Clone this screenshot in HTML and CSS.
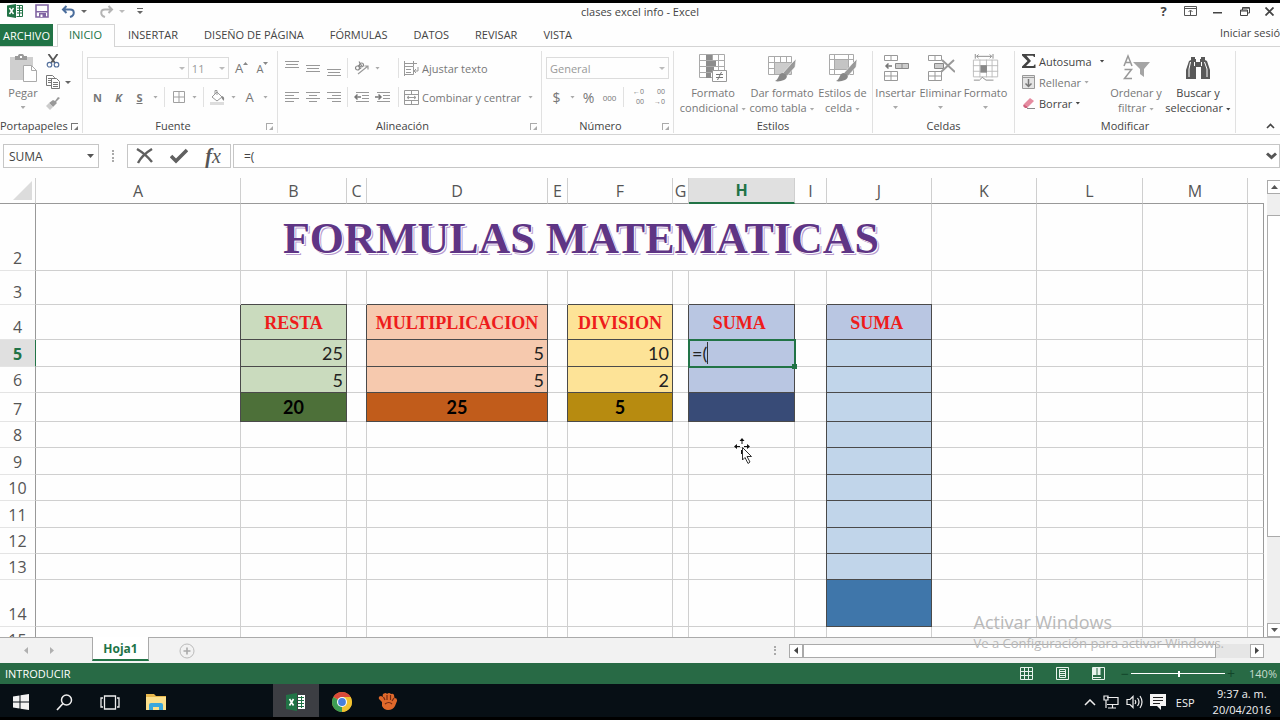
FILE: index.html
```html
<!DOCTYPE html>
<html lang="es">
<head>
  <meta charset="UTF-8" />
  <meta name="viewport" content="width=device-width, initial-scale=1.0" />
  <title>clases excel info - Excel</title>
  <link rel="stylesheet" href="styles.css">
</head>
<body>
  <header class="titlebar">
    <div class="quick-access">
      <svg class="app-icon" width="16" height="14" viewBox="0 0 16 14"><path fill="#217346" d="M0 1.5 9 0v14L0 12.5z"/><path stroke="#fff" stroke-width="1.4" d="m2.5 4 4 6m0-6-4 6"/><path fill="#fff" stroke="#217346" d="M9.5 1.5h6v11h-6"/><path stroke="#217346" d="M10 4h5M10 6.500h5M10 9h5M12.500 2v10"/></svg>
      <button aria-label="Guardar"><svg width="14" height="14" viewBox="0 0 14 14"><path fill="#fff" stroke="#8064a2" stroke-width="1.600" d="M1 1h12v12H1z"/><path fill="#8064a2" d="M1 7h12v1.500H1zM4 9h7v4H4z"/><path fill="#fff" d="M5.500 10.500h2V13h-2z"/></svg></button>
      <button class="has-caret" aria-label="Deshacer"><svg width="15" height="13" viewBox="0 0 15 13"><path fill="none" stroke="#4a6d9c" stroke-width="2" d="M2 4.500h7c5 0 5 6 0 7.500M5.500 1 2 4.500 5.500 8"/></svg></button>
      <button class="has-caret dim" aria-label="Rehacer"><svg width="15" height="13" viewBox="0 0 15 13"><path fill="none" stroke="#b4b4b4" stroke-width="2" d="M13 4.500H6c-5 0-5 6 0 7.500M9.500 1 13 4.500 9.500 8"/></svg></button>
      <button aria-label="Personalizar"><svg width="6" height="7" viewBox="0 0 6 7"><path fill="#666" d="M0 0h6v1H0zM0 3h6L3 6z"/></svg></button>
    </div>
    <div class="window-title">clases excel info - Excel</div>
    <div class="window-buttons">
      <button class="help" aria-label="Ayuda">?</button>
      <button aria-label="Opciones de la cinta"><svg width="13" height="10" viewBox="0 0 13 10"><path fill="none" stroke="#555" d="M.5.5h12v9H.5zM1 2.500h11M6.500 9V4.500M4.500 6l2-2 2 2"/></svg></button>
      <button aria-label="Minimizar"><svg width="9" height="10" viewBox="0 0 9 10"><path fill="#444" d="M0 6h9v1.500H0z"/></svg></button>
      <button aria-label="Restaurar"><svg width="10" height="9" viewBox="0 0 10 9"><path fill="none" stroke="#444" d="M.5 3h7v5.500h-7zM.5 4h7M2.500 3V.5h7V6h-2M2.500 1.200h7"/></svg></button>
      <button aria-label="Cerrar"><svg width="9" height="9" viewBox="0 0 9 9"><path stroke="#444" stroke-width="1.800" d="m.5.5 8 8m0-8-8 8"/></svg></button>
    </div>
  </header>

  <nav class="tabs">
    <button class="file-tab">ARCHIVO</button>
    <button class="tab active">INICIO</button>
    <button class="tab">INSERTAR</button>
    <button class="tab">DISEÑO DE PÁGINA</button>
    <button class="tab">FÓRMULAS</button>
    <button class="tab">DATOS</button>
    <button class="tab">REVISAR</button>
    <button class="tab">VISTA</button>
    <a class="sign-in" href="#">Iniciar sesión</a>
  </nav>

  <div class="ribbon">
    <section class="group clipboard">
      <div class="group-body">
        <button class="big dim"><svg width="28" height="28" viewBox="0 0 28 28"><path fill="#cfcfcf" d="M1 3h23v23H1z"/><path fill="#9a9a9a" d="M6 2h3c0-3 6-3 6 0h3v4H6z"/><path fill="#fff" d="M11 2h2v2h-2z"/><path fill="#fff" stroke="#aaa" d="M14.500 11.500h8l5 5v11h-13z"/><path fill="none" stroke="#aaa" d="M22.500 11.500v5h5"/></svg>Pegar<i class="caret"></i></button>
        <div class="stack">
          <button aria-label="Cortar"><svg width="14" height="14" viewBox="0 0 14 14"><path fill="none" stroke="#555" stroke-width="1.800" d="M2.500 0 9 9M11.500 0 5 9"/><circle cx="3.500" cy="10.700" r="2.300" fill="none" stroke="#54709c" stroke-width="1.200"/><circle cx="10.500" cy="10.700" r="2.300" fill="none" stroke="#54709c" stroke-width="1.200"/></svg></button>
          <button class="has-caret" aria-label="Copiar"><svg width="14" height="14" viewBox="0 0 14 14"><path fill="#fff" stroke="#777" d="M.5.5h6l2 2v8h-8zM2 3.500h5M2 5.500h5M2 7.500h5"/><path fill="#fff" stroke="#777" d="M5.500 3.500h5l3 3v7h-8zM7 7.500h5M7 9.500h5M7 11.500h5"/></svg></button>
          <button aria-label="Copiar formato"><svg width="14" height="13" viewBox="0 0 14 13"><path fill="#999" d="m14 1-4 4 1 1-4 4-4-4 4-3 2 1 3-4z"/><path fill="#ccc" d="m3 6 4 4-3 3-4-4z"/></svg></button>
        </div>
      </div>
      <div class="group-label">Portapapeles<button class="launcher dark" aria-label="Portapapeles"></button></div>
    </section>

    <section class="group font">
      <div class="group-body rows">
        <div class="row">
          <div class="combo font-name"><select aria-label="Fuente"><option></option></select></div>
          <div class="combo font-size"><select aria-label="Tamaño de fuente"><option>11</option></select></div>
          <button class="tool grow" aria-label="Aumentar tamaño">A<svg width="5" height="3" viewBox="0 0 5 3"><path fill="#888" d="M0 3h5L2.500 0z"/></svg></button>
          <button class="tool shrink" aria-label="Disminuir tamaño">A<svg width="5" height="3" viewBox="0 0 5 3"><path fill="#888" d="M0 0h5L2.500 3z"/></svg></button>
        </div>
        <div class="row">
          <button class="tool bold">N</button>
          <button class="tool bold italic">K</button>
          <button class="tool bold underline">S</button>
          <i class="caret"></i>
          <span class="sep"></span>
          <button class="tool" aria-label="Bordes"><svg width="12" height="12" viewBox="0 0 12 12"><path fill="none" stroke="#a0a0a0" d="M.5.5h11v11H.5zM6 0v12M0 6h12"/></svg></button>
          <i class="caret"></i>
          <span class="sep"></span>
          <button class="tool" aria-label="Color de relleno"><svg width="15" height="15" viewBox="0 0 15 15"><path fill="#fff" stroke="#999" d="m2 7 5-5 5 5-5 4zM5 4V.5h2V5"/><path fill="#888" d="M12 6c3 1 2 3 2 5-1-2-3-1-2-5z"/><path fill="#ddd" d="M0 12h14v3H0z"/></svg></button>
          <i class="caret"></i>
          <button class="tool big-letter" aria-label="Color de fuente">A</button>
          <i class="caret"></i>
        </div>
      </div>
      <div class="group-label">Fuente<button class="launcher" aria-label="Fuente"></button></div>
    </section>

    <section class="group align">
      <div class="group-body rows">
        <div class="row">
          <button class="tool" aria-label="Alinear arriba"><svg width="14" height="17" viewBox="0 0 14 17"><path stroke="#999" d="M0 1.500h14M1 4.500h12M0 7.500h14"/></svg></button>
          <button class="tool" aria-label="Alinear en el medio"><svg width="14" height="17" viewBox="0 0 14 17"><path stroke="#999" d="M0 5.500h14M1 8.500h12M0 11.500h14"/></svg></button>
          <button class="tool" aria-label="Alinear abajo"><svg width="14" height="17" viewBox="0 0 14 17"><path stroke="#999" d="M0 9.500h14M1 12.500h12M0 15.500h14"/></svg></button>
          <span class="sep"></span>
          <button class="tool orient" aria-label="Orientación"><svg width="16" height="14" viewBox="0 0 16 14"><path fill="none" stroke="#999" stroke-width="1.200" d="m4 13 10-8M10.500 5H14v3.500"/><circle cx="3.500" cy="7" r="2" fill="none" stroke="#888" stroke-width="1.200"/><circle cx="7.500" cy="4" r="2" fill="none" stroke="#888" stroke-width="1.200"/><path stroke="#888" stroke-width="1.200" d="m4 4 3 4M5 .5l3 5"/></svg></button>
          <i class="caret"></i>
          <span class="sep spaced"></span>
          <button class="wide-tool"><svg width="15" height="15" viewBox="0 0 15 15"><path fill="none" stroke="#999" d="M.5 0v15M0 2.500h13M0 5.500h9.500v8H.5M2 8.500h5M2 11.500h5M9.500 0v5M14 6v4h-4m2-2-2 2 2 2"/></svg>Ajustar texto</button>
        </div>
        <div class="row">
          <button class="tool" aria-label="Alinear a la izquierda"><svg width="14" height="11" viewBox="0 0 14 11"><path stroke="#999" d="M0 .5h14M0 3.500h9M0 6.500h14M0 9.500h9"/></svg></button>
          <button class="tool" aria-label="Centrar"><svg width="14" height="11" viewBox="0 0 14 11"><path stroke="#999" d="M0 .5h14M3 3.500h8M0 6.500h14M3 9.500h8"/></svg></button>
          <button class="tool" aria-label="Alinear a la derecha"><svg width="14" height="11" viewBox="0 0 14 11"><path stroke="#999" d="M0 .5h14M5 3.500h9M0 6.500h14M5 9.500h9"/></svg></button>
          <span class="sep"></span>
          <button class="tool" aria-label="Disminuir sangría"><svg width="15" height="11" viewBox="0 0 15 11"><path stroke="#999" d="M2 .5h13M8 3.500h7M8 6.500h7M2 9.500h13"/><path fill="none" stroke="#777" stroke-width="1.500" d="M7 5H1M3.500 2.500 1 5l2.500 2.500"/></svg></button>
          <button class="tool" aria-label="Aumentar sangría"><svg width="15" height="11" viewBox="0 0 15 11"><path stroke="#999" d="M2 .5h13M8 3.500h7M8 6.500h7M2 9.500h13"/><path fill="none" stroke="#777" stroke-width="1.500" d="M0 5h6M3.500 2.500 6 5 3.500 7.500"/></svg></button>
          <span class="sep roomy"></span>
          <button class="wide-tool merge"><svg width="15" height="15" viewBox="0 0 15 15"><path fill="none" stroke="#999" d="M.5.5h14v14H.5zM0 4.500h15M0 10.500h15M7.500 0v4M7.500 11v4M3 7.500h9M5 6 3 7.500 5 9M10 6l2 1.500L10 9"/></svg>Combinar y centrar</button>
          <i class="caret"></i>
        </div>
      </div>
      <div class="group-label">Alineación<button class="launcher" aria-label="Alineación"></button></div>
    </section>

    <section class="group number">
      <div class="group-body rows">
        <div class="row">
          <div class="combo format"><select aria-label="Formato de número"><option>General</option></select></div>
        </div>
        <div class="row">
          <button class="tool symbol">$</button>
          <i class="caret"></i>
          <button class="tool symbol percent">%</button>
          <button class="tool tiny">000</button>
          <span class="sep"></span>
          <button class="tool decimals" aria-label="Aumentar decimales"><span>←0</span><span>00</span></button>
          <button class="tool decimals" aria-label="Disminuir decimales"><span>00</span><span>→0</span></button>
        </div>
      </div>
      <div class="group-label">Número<button class="launcher" aria-label="Número"></button></div>
    </section>

    <section class="group styles">
      <div class="group-body">
        <button class="big dim cond"><svg width="28" height="28" viewBox="0 0 28 28"><path fill="#fff" stroke="#aaa" d="M.5.5h25v23H.5zM0 6.500h26M0 12.500h26M0 18.500h26M7.500 0v24M13.500 0v24M19.500 0v24"/><path fill="#8c8c8c" d="M7 1h6v5H7zM7 7h10v5H7zM7 13h8v5H7zM7 19h5v5H7z"/><path fill="#fff" stroke="#999" d="M13.500 16.500h14v11h-14z"/><path stroke="#777" d="M17 20.500h7M17 23.500h7M22.500 18l-4 8"/></svg><span>Formato<br>condicional <i class="caret"></i></span></button>
        <button class="big dim table"><svg width="28" height="28" viewBox="0 0 28 28"><path fill="#fff" stroke="#aaa" d="M.5 2.500h23v18H.5zM0 8.500h24M0 14.500h24M6.500 2v19M12.500 2v19M18.500 2v19"/><path fill="#ccc" d="M7 9h16v11H7z"/><path fill="#999" stroke="#fff" stroke-width=".5" d="m28 5-1 8-8 9-4-3 8-9z"/><path fill="#888" d="M15 19c5 1 5 5 1 7-3 1-6 2-9 1 4-1 3-8 8-8z"/></svg><span>Dar formato<br>como tabla <i class="caret"></i></span></button>
        <button class="big dim cell"><svg width="28" height="28" viewBox="0 0 28 28"><path fill="#fff" stroke="#aaa" d="M.5.500h24v20H.5zM0 5.500h25M0 15.500h25M5.500 0v21M19.500 0v21"/><path fill="#c4c4c4" d="M6 6h13v9H6z"/><path fill="#999" stroke="#fff" stroke-width=".5" d="m28 5-1 8-8 9-4-3 8-9z"/><path fill="#888" d="M15 19c5 1 5 5 1 7-3 1-6 2-9 1 4-1 3-8 8-8z"/></svg><span>Estilos de<br>celda <i class="caret"></i></span></button>
      </div>
      <div class="group-label">Estilos</div>
    </section>

    <section class="group cells">
      <div class="group-body">
        <button class="big dim"><svg width="28" height="28" viewBox="0 0 28 28"><path fill="#fff" stroke="#999" d="M2.500 1.500h13v5h-13zM9 1v6M2.500 17.500h13v9h-13zM9 17v10M2 22h14"/><path fill="#ccc" stroke="#888" d="M13.500 9.500h13v5h-13zM20 9v6"/><path fill="none" stroke="#777" stroke-width="1.500" d="M10 12H4m2.500-2.500L4 12l2.500 2.500"/></svg>Insertar<i class="caret"></i></button>
        <button class="big dim"><svg width="28" height="28" viewBox="0 0 28 28"><path fill="#fff" stroke="#999" d="M1.500 1.500h13v5h-13zM8 1v6M1.500 17.500h13v9h-13zM8 17v10M1 22h14"/><path fill="#ccc" stroke="#888" d="M7.500 9.500h9v5h-9z"/><path fill="none" stroke="#999" stroke-width="2" d="m15 6 13 12M27 6 14 18"/></svg>Eliminar<i class="caret"></i></button>
        <button class="big dim"><svg width="28" height="30" viewBox="0 0 28 30"><path fill="#fff" stroke="#bbb" d="M.5 6.500h26v18H.5zM0 12.500h27M0 18.500h27M7.500 6v19M14.500 6v19M20.500 6v19"/><path fill="#888" d="M8 12h7v8H8z"/><path fill="none" stroke="#888" d="M2.500 0v5M21.500 0v5M4 2.500h16M6 .5l-2 2 2 2M18 .5l2 2-2 2M1 28l6 0 3-3 4 3h8"/></svg>Formato<i class="caret"></i></button>
      </div>
      <div class="group-label">Celdas</div>
    </section>

    <section class="group edit">
      <div class="group-body">
        <div class="stack labelled">
          <button><svg width="14" height="14" viewBox="0 0 14 14"><path fill="#444" d="M0 0h13v3h-1l-1-1.200H4.500L9 7l-5 5h7.500l1-1.500h1V14H0v-1.500L5.500 7 0 1.500z"/></svg>Autosuma<i class="caret wide"></i></button>
          <button class="dim"><svg width="14" height="14" viewBox="0 0 14 14"><path fill="#e4e4e4" stroke="#999" d="M.5.500h12v13H.5zM0 2.500h13"/><path fill="none" stroke="#777" stroke-width="1.500" d="M6.500 4v8M3.500 8.500l3 3 3-3"/></svg>Rellenar<i class="caret"></i></button>
          <button><svg width="14" height="14" viewBox="0 0 14 14"><path fill="#e58ba0" d="m8 2 4 3-6 6-4-3z"/><path fill="#d0607c" d="m2 8 4 3-1 1H3L1 10z"/><path stroke="#888" d="M5 12.500h8"/></svg>Borrar<i class="caret"></i></button>
        </div>
        <button class="big dim sort"><svg width="28" height="28" viewBox="0 0 28 28"><path fill="none" stroke="#999" stroke-width="1.500" d="m2 12 4-10 4 10M3.500 8.500h5M2.500 15.500h7l-7 9h7.500"/><path fill="#a5a5a5" d="M11 8h17l-6 7v8l-4-3v-5z"/></svg><span>Ordenar y<br>filtrar <i class="caret"></i></span></button>
        <button class="big find"><svg width="28" height="28" viewBox="0 0 28 28"><path fill="#595959" d="M7 3h4v2h1v3h4V5h1V3h4v3l2 1 3 9v9h-9V13h-5v12H2v-9l3-9 2-1z"/><path stroke="#fff" d="M6.500 8 5 15v8M10.500 8v4M17.500 8v4M20.500 8l2.500 7v8"/></svg><span>Buscar y<br>seleccionar <i class="caret"></i></span></button>
      </div>
      <div class="group-label">Modificar</div>
    </section>
    <button class="collapse" aria-label="Contraer la cinta"><svg width="9" height="6" viewBox="0 0 9 6"><path fill="none" stroke="#444" stroke-width="1.600" d="m1 5 3.500-3.500L8 5"/></svg></button>
  </div>

  <div class="formula-bar">
    <div class="name-box">
      <input type="text" aria-label="Cuadro de nombres" value="SUMA">
      <button aria-label="Nombres"><svg width="7" height="4" viewBox="0 0 7 4"><path fill="#555" d="M0 0h7L3.500 4z"/></svg></button>
    </div>
    <span class="dots"></span>
    <div class="formula-buttons">
      <button aria-label="Cancelar"><svg width="18" height="16" viewBox="0 0 18 16"><path fill="none" stroke="#606060" stroke-width="2.400" d="M1 1c5 3 11 8 15 13M16 1C11 4 5 9 2 15"/></svg></button>
      <button aria-label="Introducir"><svg width="18" height="16" viewBox="0 0 18 16"><path fill="none" stroke="#606060" stroke-width="3.600" d="m1 8 5 5L17 2"/></svg></button>
      <button class="fx" aria-label="Insertar función"><b>f</b>x</button>
    </div>
    <div class="formula-box">
      <input type="text" aria-label="Barra de fórmulas" value="=(">
      <button aria-label="Expandir"><svg width="11" height="8" viewBox="0 0 11 8"><path fill="none" stroke="#555" stroke-width="3" d="m1 1.500 4.500 4 4.500-4"/></svg></button>
    </div>
  </div>

  <main class="sheet">
    <div class="grid-area">
      <table class="grid">
        <colgroup>
          <col class="c-head"><col class="c-a"><col class="c-wide"><col class="c-gap"><col class="c-d"><col class="c-gap"><col class="c-mid"><col class="c-g"><col class="c-wide"><col class="c-i"><col class="c-mid"><col class="c-mid"><col class="c-wide"><col class="c-mid"><col>
        </colgroup>
        <thead>
          <tr>
            <th class="corner"><svg width="19" height="19" viewBox="0 0 19 19"><path fill="#dcdcdc" d="M19 0v19H0z"/></svg></th>
            <th>A</th><th>B</th><th>C</th><th>D</th><th>E</th><th>F</th><th>G</th><th class="current">H</th><th>I</th><th>J</th><th>K</th><th>L</th><th>M</th><th></th>
          </tr>
        </thead>
        <tbody>
          <tr class="r-title"><th>2</th><td></td><td colspan="9" class="title">FORMULAS MATEMATICAS</td><td></td><td></td><td></td><td></td></tr>
          <tr class="r-space"><th>3</th><td></td><td></td><td></td><td></td><td></td><td></td><td></td><td></td><td></td><td></td><td></td><td></td><td></td><td></td></tr>
          <tr class="r-heading"><th>4</th><td></td><td class="name green">RESTA</td><td></td><td class="name orange">MULTIPLICACION</td><td></td><td class="name yellow">DIVISION</td><td></td><td class="name blue">SUMA&nbsp;</td><td></td><td class="name blue">SUMA&nbsp;</td><td></td><td></td><td></td><td></td></tr>
          <tr class="r-tall"><th class="current">5</th><td></td><td class="green">25</td><td></td><td class="orange">5</td><td></td><td class="yellow">10</td><td></td><td class="blue editing"><span>=(</span></td><td></td><td class="sky"></td><td></td><td></td><td></td><td></td></tr>
          <tr><th>6</th><td></td><td class="green">5</td><td></td><td class="orange">5</td><td></td><td class="yellow">2</td><td></td><td class="blue"></td><td></td><td class="sky"></td><td></td><td></td><td></td><td></td></tr>
          <tr class="r-total"><th>7</th><td></td><td class="total dark-green">20</td><td></td><td class="total dark-orange">25</td><td></td><td class="total dark-yellow">5</td><td></td><td class="total dark-blue"></td><td></td><td class="sky"></td><td></td><td></td><td></td><td></td></tr>
          <tr><th>8</th><td></td><td></td><td></td><td></td><td></td><td></td><td></td><td></td><td></td><td class="sky"></td><td></td><td></td><td></td><td></td></tr>
          <tr class="r-tall"><th>9</th><td></td><td></td><td></td><td></td><td></td><td></td><td></td><td></td><td></td><td class="sky"></td><td></td><td></td><td></td><td></td></tr>
          <tr><th>10</th><td></td><td></td><td></td><td></td><td></td><td></td><td></td><td></td><td></td><td class="sky"></td><td></td><td></td><td></td><td></td></tr>
          <tr class="r-tall"><th>11</th><td></td><td></td><td></td><td></td><td></td><td></td><td></td><td></td><td></td><td class="sky"></td><td></td><td></td><td></td><td></td></tr>
          <tr><th>12</th><td></td><td></td><td></td><td></td><td></td><td></td><td></td><td></td><td></td><td class="sky"></td><td></td><td></td><td></td><td></td></tr>
          <tr><th>13</th><td></td><td></td><td></td><td></td><td></td><td></td><td></td><td></td><td></td><td class="sky"></td><td></td><td></td><td></td><td></td></tr>
          <tr class="r-last"><th>14</th><td></td><td></td><td></td><td></td><td></td><td></td><td></td><td></td><td></td><td class="total steel"></td><td></td><td></td><td></td><td></td></tr>
          <tr><th>15</th><td></td><td></td><td></td><td></td><td></td><td></td><td></td><td></td><td></td><td></td><td></td><td></td><td></td><td></td></tr>
        </tbody>
      </table>
      <svg class="pointer" width="20" height="28" viewBox="0 0 20 28"><path fill="#111" d="m8 0 2.500 3H8.500v3h-1V3h-2zM0 8.500 3 6v2h3v1H3v2zM16 8.500 13 6v2h-3v1h3v2zM7 12h1.500v4H7z"/><path fill="#fff" stroke="#333" d="m8.500 9.500 9 9h-4.500l3 5.500-2 1.500-3-6-2.500 2.500z"/></svg>
    </div>
    <div class="v-scroll">
      <button aria-label="Subir"><svg width="7" height="4" viewBox="0 0 7 4"><path fill="#555" d="M0 4h7L3.500 0z"/></svg></button>
      <div class="v-track"><div class="v-thumb"></div></div>
      <button aria-label="Bajar"><svg width="7" height="4" viewBox="0 0 7 4"><path fill="#555" d="M0 0h7L3.500 4z"/></svg></button>
    </div>
  </main>

  <div class="sheet-tabs">
    <button class="arrow" aria-label="Hoja anterior"><svg width="4" height="7" viewBox="0 0 4 7"><path fill="#b0b0b0" d="M4 0v7L0 3.500z"/></svg></button>
    <button class="arrow" aria-label="Hoja siguiente"><svg width="4" height="7" viewBox="0 0 4 7"><path fill="#b0b0b0" d="M0 0v7l4-3.500z"/></svg></button>
    <button class="sheet-tab">Hoja1</button>
    <button class="add-sheet" aria-label="Hoja nueva"><svg width="16" height="16" viewBox="0 0 16 16"><circle cx="8" cy="8" r="7" fill="none" stroke="#bbb"/><path stroke="#aaa" stroke-width="1.600" d="M4.500 8h7M8 4.500v7"/></svg></button>
    <span class="dots"></span>
    <div class="h-scroll">
      <button aria-label="Izquierda"><svg width="4" height="7" viewBox="0 0 4 7"><path fill="#444" d="M4 0v7L0 3.500z"/></svg></button>
      <div class="h-thumb"></div>
      <div class="h-track"></div>
      <button aria-label="Derecha"><svg width="4" height="7" viewBox="0 0 4 7"><path fill="#444" d="M0 0v7l4-3.500z"/></svg></button>
    </div>
  </div>

  <div class="status-bar">
    <span>INTRODUCIR</span>
    <div class="views">
      <button aria-label="Normal"><svg width="13" height="13" viewBox="0 0 13 13"><path fill="none" stroke="#e8f3ec" d="M.5.500h12v12H.5zM0 4.500h13M0 8.500h13M4.500 0v13M8.500 0v13"/></svg></button>
      <button aria-label="Diseño de página"><svg width="13" height="13" viewBox="0 0 13 13"><path fill="none" stroke="#e8f3ec" d="M.5.500h12v12H.5zM3.500 2.500h6v8h-6zM4 4.500h5M4 6.500h5M4 8.500h5"/></svg></button>
      <button aria-label="Salto de página"><svg width="13" height="13" viewBox="0 0 13 13"><path fill="none" stroke="#e8f3ec" d="M.5.500h12v12H.5z"/><path fill="#e8f3ec" d="M1 1h3.500v7H1zM5.500 1h3v7h-3zM0 10h9v1H0z"/></svg></button>
    </div>
    <div class="zoom">
      <button aria-label="Alejar">−</button>
      <input type="range" min="0" max="100" value="51" aria-label="Zoom">
      <button aria-label="Acercar">+</button>
      <span>140%</span>
    </div>
  </div>

  <footer class="taskbar">
    <button class="task start" aria-label="Inicio"><svg width="16" height="16" viewBox="0 0 16 16"><path fill="#f2f2f2" d="m0 2.500 6.500-1v6H0zM7.500 1.300 16 0v7.500H7.500zM0 8.500h6.500v6L0 13.500zM7.500 8.500H16V16l-8.500-1.300z"/></svg></button>
    <button class="task" aria-label="Buscar"><svg width="17" height="17" viewBox="0 0 17 17"><circle cx="10.500" cy="6" r="5" fill="none" stroke="#eee" stroke-width="1.500"/><path stroke="#eee" stroke-width="1.700" d="m7 9.500-6 6.500"/></svg></button>
    <button class="task" aria-label="Vista de tareas"><svg width="20" height="15" viewBox="0 0 20 15"><path fill="none" stroke="#eee" stroke-width="1.300" d="M4.500 1h11v13h-11zM3 3H1v9h2M17 3h2v9h-2"/></svg></button>
    <button class="task" aria-label="Explorador de archivos"><svg width="20" height="18" viewBox="0 0 20 18"><path fill="#e8b84c" d="M0 1h8l2 2h10v14H0z"/><path fill="#fbe08c" d="M0 4h20v13H0z"/><path fill="#3aa7dd" d="M3 17V12q0-2 2-2h10q2 0 2 2v5h-4v-3H7v3z"/></svg></button>
    <button class="task running" aria-label="Excel"><svg width="20" height="18" viewBox="0 0 20 18"><path fill="#217346" d="M0 2 11 0v18L0 16z"/><path stroke="#fff" stroke-width="1.600" d="m3.500 6 4 6.500m0-6.500-4 6.500"/><path fill="#fff" d="M12 2h7v14h-7z"/><path stroke="#217346" d="M12 4.500h6M12 7.500h6M12 10.500h6M12 13.500h6M15.500 3v12"/></svg></button>
    <button class="task" aria-label="Chrome"><svg width="22" height="22" viewBox="0 0 22 22"><circle cx="11" cy="11" r="10" fill="#f2c230"/><path fill="#da4a3a" d="M11 11 2.340 6a10 10 0 0 1 17.320 0z"/><path fill="#3d9c54" d="M11 11v10A10 10 0 0 1 2.340 6z"/><path fill="#f2c230" d="M11 6h8.660A10 10 0 0 1 11 21l4-8z"/><circle cx="11" cy="11" r="5" fill="#fff"/><circle cx="11" cy="11" r="3.900" fill="#4a80dc"/></svg></button>
    <button class="task" aria-label="Captura"><svg width="20" height="18" viewBox="0 0 20 18"><path fill="#e0692b" d="M4 9 1 6q-1-3 2-3l2 1q-1-3 1-3.500Q8-.5 9 1q2-2 4 0 2-1 3 1l.5 3q3 0 2.500 3l-2 5q-2 4-7 4-4 0-6-4z"/><path fill="none" stroke="#732a14" stroke-width="1.200" d="M5.500 4 7 7M9 2v5M12.500 2v5M16 5l-2 3M7 11q4-3 7 0"/></svg></button>
    <div class="tray">
      <svg width="12" height="7" viewBox="0 0 12 7"><path fill="none" stroke="#eee" stroke-width="1.500" d="m1 6 5-5 5 5"/></svg>
      <svg width="16" height="14" viewBox="0 0 16 14"><path fill="none" stroke="#eee" stroke-width="1.200" d="M4 2.500h11v7H4M9.500 10v3M5 13h8M1 1h4v4H1zM3 5v8"/></svg>
      <svg width="17" height="14" viewBox="0 0 17 14"><path fill="none" stroke="#eee" stroke-width="1.200" d="M1 4.500h3l3-3v11l-3-3H1zM9 5q1.500 2 0 4M11.500 3q3 4 0 8M14 1q4 6 0 12"/></svg>
      <svg width="16" height="16" viewBox="0 0 16 16"><path fill="#f4f4f4" d="M0 0h16v12h-5v4l-4-4H0z"/><path stroke="#222" d="M3 3.500h10M3 6.500h10M3 9.500h7"/></svg>
      <span class="lang">ESP</span>
      <div class="clock">9:37 a. m.<br>20/04/2016</div>
    </div>
  </footer>

  <div class="watermark">
    <div class="big-line">Activar Windows</div>
    <div>Ve a Configuración para activar Windows.</div>
  </div>
</body>
</html>
```
FILE: styles.css
```css
* {
  box-sizing: border-box;
}
body {
  margin: 0;
  height: 100vh;
  display: flex;
  flex-direction: column;
  overflow: hidden;
  background: #fefefe;
  color: #444;
  font-family: "Open Sans", "Noto Sans", sans-serif;
  font-size: 11px;
  border-top: 3px solid #000;
  border-bottom: 3px solid #000;
}
button, input, select {
  font: inherit;
  color: inherit;
  background: none;
  border: none;
  border-radius: 0;
  padding: 0;
  margin: 0;
  outline: none;
}
button {
  display: flex;
  align-items: center;
  justify-content: center;
  flex-shrink: 0;
  white-space: nowrap;
}
svg {
  display: block;
  fill: none;
  flex-shrink: 0;
}
.caret {
  width: 5px;
  height: 3px;
  flex-shrink: 0;
  display: inline-block;
  vertical-align: middle;
  background: currentColor;
  clip-path: polygon(0 0, 100% 0, 50% 100%);
}
.dim {
  color: #777;
}
.dim .caret {
  color: #aaa;
}

/* title bar */
.titlebar {
  height: 21px;
  flex-shrink: 0;
  display: grid;
  grid-template-columns: 1fr auto 1fr;
  align-items: start;
  line-height: 18px;
}
.quick-access {
  display: flex;
  align-items: center;
  padding-left: 7px;
  gap: 12px;
  height: 16px;
}
.has-caret::after {
  content: "";
  margin-left: 5px;
  border: 3px solid transparent;
  border-top-color: #666;
  border-bottom: none;
}
.has-caret.dim::after {
  border-top-color: #bbb;
}
.window-buttons {
  display: flex;
  justify-content: flex-end;
  height: 16px;
}
.window-buttons button {
  width: 27px;
  height: 16px;
}
.window-buttons button:last-child {
  width: 22px;
}
.help {
  font-size: 13px;
  font-weight: bold;
}

/* tabs */
.tabs {
  height: 23px;
  flex-shrink: 0;
  display: flex;
  border-bottom: 1px solid #d4d4d4;
}
.file-tab {
  width: 53px;
  margin-right: 4px;
  background: #217346;
  color: #fff;
}
.tab {
  padding: 0 13px 1px;
}
.tab.active {
  color: #217346;
  border: 1px solid #d4d4d4;
  border-bottom: none;
  padding: 0 12px 3px 11px;
  margin-bottom: -1px;
  background: #fefefe;
}
.sign-in {
  margin-left: auto;
  width: 60px;
  white-space: nowrap;
  color: #444;
  text-decoration: none;
  line-height: 18px;
}

/* ribbon */
.ribbon {
  height: 88px;
  flex-shrink: 0;
  display: flex;
  padding: 4px 0 1px;
  border-bottom: 1px solid #d4d4d4;
}
.group {
  flex-shrink: 0;
  border-right: 1px solid #e1e1e1;
}
.group-body {
  display: flex;
  height: 68px;
}
.group-label {
  position: relative;
  line-height: 14px;
  text-align: center;
}
.launcher {
  position: absolute;
  right: 4px;
  top: 4px;
  width: 7px;
  height: 7px;
  border-top: 1px solid #aaa;
  border-left: 1px solid #aaa;
}
.launcher::after {
  content: "";
  position: absolute;
  right: 0;
  bottom: 0;
  border: 2px solid #aaa;
  border-top-color: transparent;
  border-left-color: transparent;
}
.launcher.dark, .launcher.dark::after {
  border-right-color: #777;
  border-bottom-color: #777;
}
.launcher.dark {
  border-color: #777 transparent transparent #777;
}
.clipboard {
  width: 83px;
}
.clipboard .group-label {
  text-align: left;
}
.clipboard .big {
  width: 30px;
  margin: 0 8px;
}
.font {
  width: 195px;
}
.font .group-label {
  padding-right: 14px;
}
.align {
  width: 264px;
}
.align .group-label {
  padding-right: 14px;
}
.number {
  width: 132px;
}
.number .group-label {
  padding-right: 14px;
}
.styles {
  width: 199px;
}
.styles .group-body {
  padding-left: 5px;
}
.cells {
  width: 142px;
}
.edit {
  width: 221px;
}
.big {
  flex-direction: column;
  justify-content: flex-start;
  padding-top: 3px;
  line-height: 15px;
}
.big svg {
  height: 28px;
  margin-bottom: 3px;
}
.big > .caret {
  margin-top: 6px;
}
.cond {
  width: 68px;
}
.table {
  width: 70px;
}
.cell {
  width: 51px;
}
.cells .big {
  width: 45px;
}
.sort {
  width: 58px;
}
.find {
  width: 66px;
}
.stack {
  display: flex;
  flex-direction: column;
  align-items: flex-start;
  gap: 1px;
}
.stack button {
  height: 20px;
}
.labelled {
  width: 92px;
  padding-left: 7px;
}
.labelled svg {
  margin-right: 3px;
}
.labelled .caret {
  margin-left: 3px;
}
.labelled .caret.wide {
  margin-left: 8px;
}
.rows {
  flex-direction: column;
  padding: 6px 4px 0;
  gap: 7px;
}
.align .rows {
  padding-left: 3px;
}
.row {
  display: flex;
  align-items: center;
  height: 22px;
  color: #777;
}
.row .caret {
  color: #aaa;
  margin: 0 3px;
}
.tool {
  width: 21px;
  height: 22px;
}
.sep {
  width: 1px;
  height: 20px;
  margin: 0 3px;
  background: #e1e1e1;
}
.sep.roomy {
  margin: 0 5px;
}
.sep.spaced {
  margin: 0 5px 0 15px;
}
.combo {
  position: relative;
  height: 22px;
  border: 1px solid #dcdcdc;
  color: #999;
}
.combo select {
  appearance: none;
  width: 100%;
  height: 20px;
  padding-left: 3px;
}
.combo::after {
  content: "";
  position: absolute;
  right: 3px;
  top: 9px;
  border: 3px solid transparent;
  border-top-color: #bbb;
  border-bottom: none;
}
.font-name {
  width: 104px;
}
.font-size {
  width: 41px;
  border-left: none;
  margin-right: 2px;
}
.format {
  width: 123px;
}
.grow {
  font-size: 13px;
}
.shrink {
  font-size: 11px;
}
.grow svg, .shrink svg {
  align-self: flex-start;
  margin-top: 5px;
}
.bold {
  font-weight: bold;
}
.italic {
  font-style: italic;
}
.underline {
  text-decoration: underline;
}
.big-letter {
  font-size: 13px;
}
.symbol {
  font-size: 14px;
}
.tiny {
  font-size: 8px;
}
.decimals {
  flex-direction: column;
  align-items: flex-end;
  padding-right: 4px;
  font-size: 7px;
  line-height: 10px;
}
.wide-tool svg {
  margin-right: 3px;
}
.merge {
  margin-right: 4px;
}
.collapse {
  margin-left: auto;
  align-self: flex-end;
  width: 20px;
  height: 14px;
}

/* formula bar */
.formula-bar {
  display: flex;
  flex-shrink: 0;
  height: 43px;
  padding: 9px 0 10px 3px;
  font-size: 12px;
}
.name-box, .formula-buttons, .formula-box {
  display: flex;
  border: 1px solid #c6c6c6;
  background: #fff;
}
.name-box {
  width: 96px;
}
.name-box input {
  width: 78px;
  padding-left: 5px;
}
.name-box button {
  width: 16px;
}
.dots {
  width: 1px;
  height: 12px;
  align-self: center;
  margin: 0 13px;
  border-left: 2px dotted #aaa;
}
.formula-buttons {
  width: 104px;
  margin-right: 2px;
}
.formula-buttons button {
  width: 34px;
}
.formula-buttons .fx {
  font: italic 20px "Liberation Serif", serif;
  color: #555;
}
.formula-box {
  flex: 1;
}
.formula-box input {
  flex: 1;
  min-width: 0;
  padding-left: 10px;
}
.formula-box button {
  width: 15px;
}

/* worksheet */
.sheet {
  flex: 1;
  min-height: 0;
  display: flex;
}
.grid-area {
  position: relative;
  flex: 1;
  overflow: hidden;
}
.grid {
  width: 100%;
  table-layout: fixed;
  border-collapse: separate;
  border-spacing: 0;
}
.c-head {
  width: 36px;
}
.c-a {
  width: 205px;
}
.c-wide {
  width: 106px;
}
.c-mid {
  width: 105px;
}
.c-gap {
  width: 20px;
}
.c-d {
  width: 181px;
}
.c-g {
  width: 16px;
}
.c-i {
  width: 32px;
}
.grid tr {
  height: 26px;
}
.grid .r-title {
  height: 67px;
}
.grid .r-space {
  height: 34px;
}
.grid .r-heading {
  height: 35px;
}
.grid .r-tall {
  height: 27px;
}
.grid .r-total {
  height: 29px;
}
.grid .r-last {
  height: 47px;
}
.grid th, .grid td {
  padding: 0;
  border-right: 1px solid #cfcfcf;
  border-bottom: 1px solid #cfcfcf;
  line-height: 22px;
}
.grid th {
  font-size: 16px;
  font-weight: normal;
  color: #555;
}
.grid thead th {
  border-bottom-color: #999;
}
.grid thead th:last-child {
  border-right: none;
}
.grid tbody th {
  vertical-align: bottom;
  line-height: 24px;
  border-right-color: #999;
  border-bottom-color: #e4e4e4;
}
.grid td {
  font-family: Lato, sans-serif;
  font-size: 18px;
  color: #222;
  text-align: right;
  padding-right: 3px;
}
.grid td:last-child {
  border-right-color: #999;
}
.grid th.corner svg {
  margin-left: 13px;
}
.grid th.current {
  background: #e0e0e0;
  color: #217346;
  font-weight: bold;
}
.grid thead th.current {
  border-bottom: 2px solid #217346;
}
.grid tbody th.current {
  border-right-color: #217346;
}
.grid .title {
  padding: 4px 10px 0 0;
  font-family: "Liberation Serif", serif;
  font-size: 44px;
  font-weight: bold;
  line-height: 60px;
  text-align: center;
  color: #5f3585;
  text-shadow: 1px 1px 0 #fff, 2px 2px 0 #b79ad0;
}
.grid .name {
  font-family: "Liberation Serif", serif;
  font-size: 18px;
  font-weight: bold;
  text-align: center;
  padding: 2px 0 0;
  color: #ee1c1c;
}
.grid .total {
  padding: 0;
  font-weight: bold;
  text-align: center;
  color: #000;
}
.grid .green, .grid .orange, .grid .yellow, .grid .blue, .grid .sky, .grid .total {
  border-color: #4a4a4a;
  box-shadow: -1px 0 0 #4a4a4a, 0 -1px 0 #4a4a4a;
}
.green {
  background: #cadbbe;
}
.orange {
  background: #f6c9ae;
}
.yellow {
  background: #fde397;
}
.blue {
  background: #b9c6e2;
}
.sky {
  background: #c1d5ea;
}
.dark-green {
  background: #4d7039;
}
.dark-orange {
  background: #c15c1b;
}
.dark-yellow {
  background: #b78b10;
}
.dark-blue {
  background: #384b77;
}
.steel {
  background: #3f76aa;
}
.grid .editing {
  position: relative;
  text-align: left;
  padding-left: 3px;
  outline: 2px solid #217346;
  outline-offset: -1px;
}
.editing span {
  border-right: 1px solid #333;
}
.editing::after {
  content: "";
  position: absolute;
  right: -3px;
  bottom: -3px;
  width: 5px;
  height: 5px;
  background: #217346;
}
.pointer {
  position: absolute;
  left: 734px;
  top: 260px;
}
.v-scroll {
  width: 16px;
  padding: 2px 0 0 3px;
  display: flex;
  flex-direction: column;
}
.v-scroll button {
  height: 14px;
  border: 1px solid #aaa;
  border-right: none;
  background: #fff;
}
.v-track {
  flex: 1;
  padding-top: 21px;
  background: #efefef;
}
.v-thumb {
  height: 79%;
  border: 1px solid #aaa;
  border-right: none;
  background: #fff;
}

/* sheet tabs */
.sheet-tabs {
  height: 26px;
  flex-shrink: 0;
  display: flex;
  align-items: center;
  padding: 0 16px 0 13px;
  border-top: 1px solid #aaa;
  background: #f2f2f2;
}
.arrow {
  width: 26px;
  height: 20px;
}
.sheet-tab {
  align-self: flex-start;
  width: 57px;
  height: 24px;
  margin: -1px 30px 0 27px;
  border: 1px solid #aaa;
  border-top: none;
  border-bottom: 2px solid #217346;
  background: #fff;
  color: #217346;
  font-size: 12px;
  font-weight: bold;
}
.sheet-tabs .dots {
  height: 9px;
  margin-left: auto;
}
.h-scroll {
  display: flex;
  width: 38%;
  height: 14px;
}
.h-scroll button {
  width: 14px;
  border: 1px solid #aaa;
  background: #fff;
}
.h-thumb {
  flex: 12;
  border: 1px solid #aaa;
  background: #fff;
}
.h-track {
  flex: 1;
  background: #e6e6e6;
}

/* status bar */
.status-bar {
  height: 21px;
  flex-shrink: 0;
  display: flex;
  align-items: center;
  padding: 0 3px 0 5px;
  background: #286a45;
  color: #fff;
}
.views {
  display: flex;
  gap: 23px;
  margin-left: auto;
}
.zoom {
  display: flex;
  align-items: center;
  margin-left: 14px;
}
.zoom button {
  width: 12px;
  color: #12452a;
  font-size: 14px;
  line-height: 16px;
}
.zoom input {
  appearance: none;
  width: 94px;
  height: 1px;
  background: #fff;
}
.zoom input::-webkit-slider-thumb {
  appearance: none;
  width: 2px;
  height: 6px;
  background: #fff;
}
.zoom span {
  margin-left: 12px;
  color: #c5dccd;
}

/* windows taskbar */
.taskbar {
  height: 33px;
  flex-shrink: 0;
  display: flex;
  background: #070f15;
  color: #f2f2f2;
}
.task {
  width: 46px;
  padding-top: 3px;
}
.task.start {
  width: 41px;
}
.task.running {
  margin-left: 94px;
  background: #3c3e43;
}
.tray {
  display: flex;
  align-items: center;
  margin-left: auto;
  padding: 3px 9px 0 0;
  gap: 7px;
}
.lang {
  margin-left: 3px;
}
.clock {
  margin-left: 11px;
  line-height: 16px;
  text-align: center;
}

/* activation notice over the sheet */
.watermark {
  position: absolute;
  right: 56px;
  bottom: 67px;
  color: #b9b9b9;
  font-size: 13px;
  line-height: 20px;
  pointer-events: none;
}
.big-line {
  font-size: 18px;
  line-height: 22px;
}
```
